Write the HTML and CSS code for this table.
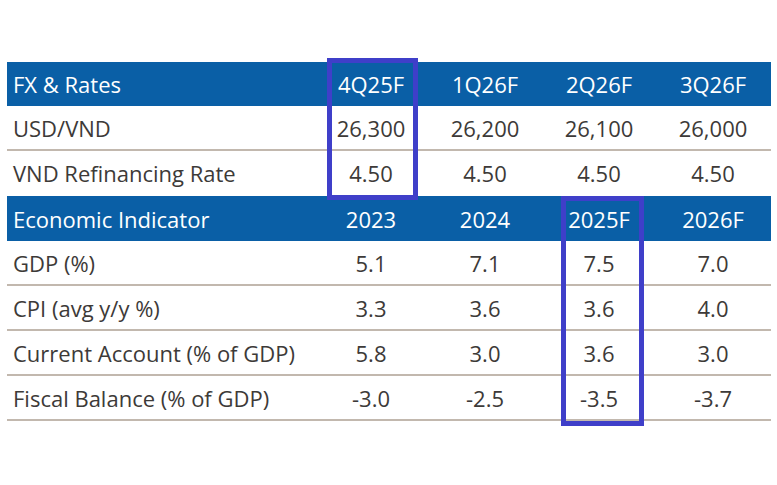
FILE: index.html
```html
<!DOCTYPE html>
<html>
<head>
<meta charset="utf-8">
<link rel="stylesheet" href="styles.css">
</head>
<body>
<div class="page">
  <div class="table">
    <div class="row head">
      <div class="label">FX &amp; Rates</div><div class="val">4Q25F</div><div class="val">1Q26F</div><div class="val">2Q26F</div><div class="val">3Q26F</div>
    </div>
    <div class="row line">
      <div class="label">USD/VND</div><div class="val">26,300</div><div class="val">26,200</div><div class="val">26,100</div><div class="val">26,000</div>
    </div>
    <div class="row last">
      <div class="label">VND Refinancing Rate</div><div class="val">4.50</div><div class="val">4.50</div><div class="val">4.50</div><div class="val">4.50</div>
    </div>
    <div class="row head head2">
      <div class="label">Economic Indicator</div><div class="val">2023</div><div class="val">2024</div><div class="val">2025F</div><div class="val">2026F</div>
    </div>
    <div class="row line">
      <div class="label">GDP (%)</div><div class="val">5.1</div><div class="val">7.1</div><div class="val">7.5</div><div class="val">7.0</div>
    </div>
    <div class="row line">
      <div class="label">CPI (avg y/y %)</div><div class="val">3.3</div><div class="val">3.6</div><div class="val">3.6</div><div class="val">4.0</div>
    </div>
    <div class="row line">
      <div class="label">Current Account (% of GDP)</div><div class="val">5.8</div><div class="val">3.0</div><div class="val">3.6</div><div class="val">3.0</div>
    </div>
    <div class="row line">
      <div class="label">Fiscal Balance (% of GDP)</div><div class="val">-3.0</div><div class="val">-2.5</div><div class="val">-3.5</div><div class="val">-3.7</div>
    </div>
  </div>
  <div class="mark mark1"></div>
  <div class="mark mark2"></div>
</div>
</body>
</html>
```
FILE: styles.css
```css
html, body {
  margin: 0;
  padding: 0;
  background: #ffffff;
}
.page {
  position: relative;
  width: 777px;
  height: 485px;
  padding: 62px 0 0 7px;
  box-sizing: border-box;
  font-family: "Open Sans", "Liberation Sans", sans-serif;
}
.table {
  width: 764px;
  display: flex;
  flex-direction: column;
}
.row {
  display: grid;
  grid-template-columns: 307px repeat(4, 114px);
  align-items: center;
  height: 43px;
  font-size: 22px;
  line-height: 1;
  color: #3d3a38;
}
.row .label {
  padding-left: 6px;
}
.row .val {
  text-align: center;
}
.head {
  background: #0a5fa6;
  color: #ffffff;
  height: 44px;
}
.head2 {
  height: 45px;
  margin-top: 2px;
}
.line {
  border-bottom: 2px solid #c2b8ae;
}
.last {
  height: 43px;
}
.mark {
  position: absolute;
  border: 5px solid #3f3fc9;
  box-sizing: border-box;
}
.mark1 {
  left: 327px;
  top: 58px;
  width: 91px;
  height: 142px;
}
.mark2 {
  left: 561px;
  top: 196px;
  width: 83px;
  height: 230px;
}
```
